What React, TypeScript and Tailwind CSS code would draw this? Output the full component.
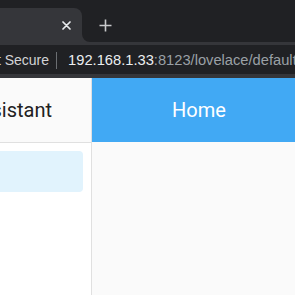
import React from "react";

const CloseIcon = () => (
  <svg width="9" height="9" viewBox="0 0 9 9" className="block">
    <path d="M1 1 L8 8 M8 1 L1 8" stroke="#e8eaed" strokeWidth="1.7" strokeLinecap="round" />
  </svg>
);

const PlusIcon = () => (
  <svg width="13" height="13" viewBox="0 0 13 13" className="block">
    <path d="M6.5 0.5 V12.5 M0.5 6.5 H12.5" stroke="#c8c9cb" strokeWidth="1.6" />
  </svg>
);

const TabFoot = () => (
  <svg width="8" height="8" viewBox="0 0 8 8" className="block self-end">
    <path d="M0 0 A8 8 0 0 0 8 8 H0 Z" fill="#35363a" />
  </svg>
);

export default function App() {
  return (
    <div className="w-[295px] h-[295px] overflow-hidden flex flex-col bg-[#202124]">
      {/* tab strip */}
      <div className="h-[42px] shrink-0 flex items-end">
        <div className="w-[82px] h-[34px] bg-[#35363a] rounded-tr-[8px] flex items-center justify-end pr-[11px]">
          <CloseIcon />
        </div>
        <TabFoot />
        <div className="h-[34px] ml-[9px] flex items-center">
          <PlusIcon />
        </div>
      </div>

      {/* toolbar / omnibox */}
      <div className="h-[36px] shrink-0 bg-[#35363a] pt-[3px] pb-[4px]">
        <div className="h-[29px] pt-[2px] bg-[#202124] flex items-center whitespace-nowrap overflow-hidden text-[14px] font-['Liberation_Sans',sans-serif]">
          <span className="ml-[-21px] text-[#d2d3d5]">Not Secure</span>
          <span className="ml-[7px] w-px h-[17px] bg-[#6b6e72] shrink-0" />
          <span className="ml-[11px] text-[14.7px]">
            <span className="text-[#eceef0]">192.168.1.33</span>
            <span className="text-[#9aa0a6]">:8123/lovelace/default</span>
          </span>
        </div>
      </div>

      {/* page */}
      <div className="flex-1 flex bg-[#fafafa] font-['Roboto',sans-serif]">
        <aside className="w-[92px] shrink-0 border-r border-[#e0e0e0] bg-white flex flex-col">
          <div className="h-[65px] border-b border-[#e0e0e0] bg-[#fafafa] flex items-center justify-end pr-[39px] overflow-hidden whitespace-nowrap text-[20px] text-[#212121]">
            Home Assistant
          </div>
          <div className="mt-[8px] h-[41px] -ml-[8px] mr-[8px] rounded-[4px] bg-[#e1f3fd]" />
        </aside>
        <main className="flex-1 flex flex-col">
          <header className="h-[64px] bg-[#41a9f4] text-white text-[20px] flex items-center pl-[80px]">
            Home
          </header>
        </main>
      </div>
    </div>
  );
}
